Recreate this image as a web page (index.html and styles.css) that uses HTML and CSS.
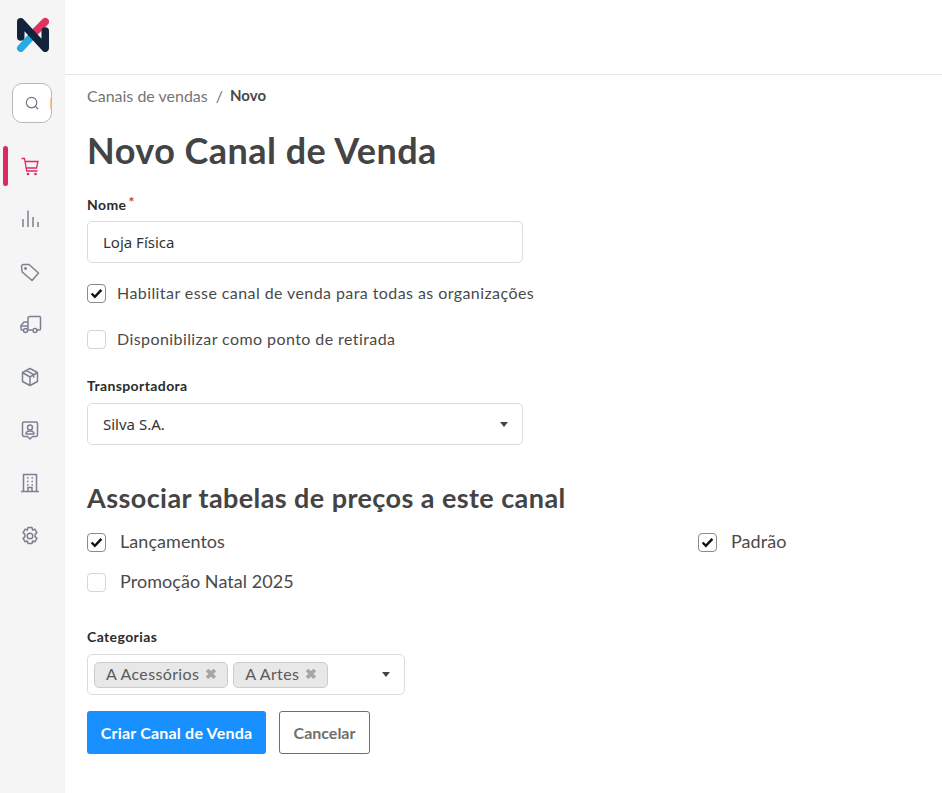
FILE: index.html
```html
<!DOCTYPE html>
<html lang="pt-BR">
<head>
  <meta charset="UTF-8" />
  <meta name="viewport" content="width=device-width, initial-scale=1.0"/>
  <title>Novo Canal de Venda</title>
  <link rel="stylesheet" href="styles.css">
</head>
<body>
  <aside class="sidebar">
    <svg class="logo" viewBox="0 0 33 35" width="33" height="35" fill="none" stroke-width="7.500" stroke-linecap="round" stroke-linejoin="round">
      <path d="M4.750 31.250 L15 20" stroke="#27a9e1"/>
      <path d="M29.250 4.750 L18 16" stroke="#e0315f"/>
      <path d="M4.750 20 V4.750 L29.250 31.250 V14" stroke="#14233c"/>
    </svg>
    <div class="search-box">
      <svg viewBox="0 0 16 16" width="14" height="14" fill="none" stroke="#6c7280" stroke-width="1.300"><circle cx="7.500" cy="7.500" r="6"/><path d="M12 12l3 3"/></svg>
      <span class="search-mark"></span>
    </div>
    <nav class="nav">
      <a class="nav-item active">
        <svg viewBox="0 0 20 20" width="20" height="20" fill="none" stroke="#e0285f" stroke-width="1.300"><path d="M1.500 2.500H4.500L6.700 15H17.500M5 5.500H18L16.500 12H6"/><circle cx="8" cy="18" r=".7"/><circle cx="15.500" cy="18" r=".7"/></svg>
      </a>
      <a class="nav-item">
        <svg viewBox="0 0 20 20" width="20" height="20" fill="none" stroke="#7d8090" stroke-width="1.500"><path d="M3 18v-8M8 18V1.500M13 18V8M18 18v-5"/></svg>
      </a>
      <a class="nav-item">
        <svg viewBox="0 0 20 20" width="20" height="20" fill="none" stroke="#7d8090" stroke-width="1.500"><path d="M1.500 4.500a2 2 0 0 1 2-2h5.500l9.500 8.500-6.500 7.500-9.800-8.500z" stroke-linejoin="round"/><circle cx="5.500" cy="6.500" r=".7"/></svg>
      </a>
      <a class="nav-item truck">
        <svg viewBox="0 0 22 20" width="22" height="20" fill="none" stroke="#7d8090" stroke-width="1.500"><path d="M8 15V4.500a2 2 0 0 1 2-2h9.500a1 1 0 0 1 1 1V15a1 1 0 0 1-1 1h-3.500M12.500 16H8M3.500 16H2a1 1 0 0 1-1-1v-3.500L4 8h4"/><path d="M1 12h7"/><circle cx="5.500" cy="16.500" r="2"/><circle cx="15" cy="16.500" r="2"/></svg>
      </a>
      <a class="nav-item">
        <svg viewBox="0 0 20 20" width="20" height="20" fill="none" stroke="#7d8090" stroke-width="1.500" stroke-linejoin="round"><path d="M10 1.500l7.500 4v9L10 18.500l-7.500-4v-9zM2.500 5.500L10 10l7.500-4.500M10 10v8.500M6.200 3.500l7.500 4.200v3"/></svg>
      </a>
      <a class="nav-item">
        <svg viewBox="0 0 20 20" width="20" height="20" fill="none" stroke="#7d8090" stroke-width="1.500" stroke-linejoin="round"><path d="M4 2h12a1.500 1.500 0 0 1 1.500 1.500v11.500a1.500 1.500 0 0 1-1.500 1.500h-3.500L10 19l-2.500-2.500H4A1.500 1.500 0 0 1 2.500 15V3.500A1.500 1.500 0 0 1 4 2z"/><circle cx="10" cy="7.500" r="2.500"/><path d="M6 14c0-4 8-4 8 0z"/></svg>
      </a>
      <a class="nav-item">
        <svg viewBox="0 0 20 20" width="20" height="20" fill="none" stroke="#7d8090" stroke-width="1.500"><path d="M1 18.500h18M3.500 18.500V1.500h13v17M8 18.500v-4h4v4"/><path d="M7 5h1.500M11.500 5H13M7 8.500h1.500M11.500 8.500H13M7 12h1.500M11.500 12H13"/></svg>
      </a>
      <a class="nav-item">
        <svg viewBox="0 0 20 20" width="20" height="20" fill="none" stroke="#7d8090" stroke-width="1.500" stroke-linejoin="round"><path d="M8 1.500h4l.6 2.500 2.300-.8 2 3.400-1.800 1.800v2.200l1.800 1.800-2 3.400-2.300-.8-.6 2.500H8l-.6-2.500-2.300.8-2-3.400 1.800-1.800V8.400L3.100 6.600l2-3.400 2.300.8z"/><circle cx="10" cy="10" r="2.800"/></svg>
      </a>
    </nav>
  </aside>

  <div class="page">
    <header class="topbar"></header>
    <main class="content">
      <div class="breadcrumb"><span>Canais de vendas</span><span class="sep">/</span><strong>Novo</strong></div>
      <h1>Novo Canal de Venda</h1>

      <form class="form">
        <label class="field-label">Nome<span class="req">*</span></label>
        <input class="text-input" type="text" value="Loja Física">

        <label class="check-row first"><span class="box checked"><svg viewBox="0 0 16 16" width="13" height="13"><path d="M2 8l4 4 8-8.500" fill="none" stroke="#111" stroke-width="3"/></svg></span><span class="check-text">Habilitar esse canal de venda para todas as organizações</span></label>
        <label class="check-row"><span class="box"></span><span class="check-text">Disponibilizar como ponto de retirada</span></label>

        <label class="field-label carrier">Transportadora</label>
        <div class="select-box"><span>Silva S.A.</span><i class="caret"></i></div>

        <h2>Associar tabelas de preços a este canal</h2>
        <div class="price-grid">
          <label class="price-row"><span class="box checked"><svg viewBox="0 0 16 16" width="13" height="13"><path d="M2 8l4 4 8-8.500" fill="none" stroke="#111" stroke-width="3"/></svg></span><span class="check-text">Lançamentos</span></label>
          <label class="price-row"><span class="box checked"><svg viewBox="0 0 16 16" width="13" height="13"><path d="M2 8l4 4 8-8.500" fill="none" stroke="#111" stroke-width="3"/></svg></span><span class="check-text">Padrão</span></label>
          <label class="price-row"><span class="box"></span><span class="check-text">Promoção Natal 2025</span></label>
        </div>

        <label class="field-label categories">Categorias</label>
        <div class="multi-select">
          <span class="tag">A Acessórios<b>✖</b></span>
          <span class="tag">A Artes<b>✖</b></span>
          <i class="caret"></i>
        </div>

        <div class="actions">
          <button type="button" class="btn-primary">Criar Canal de Venda</button>
          <button type="button" class="btn-outline">Cancelar</button>
        </div>
      </form>
    </main>
  </div>
</body>
</html>
```

FILE: styles.css
```css
* {
  box-sizing: border-box;
}

body {
  margin: 0;
  height: 793px;
  overflow: hidden;
  display: flex;
  background: #fff;
  color: #4a4a4a;
  font-family: 'Lato', 'Noto Sans', sans-serif;
  font-size: 16px;
}

.sidebar {
  width: 65px;
  flex: none;
  background: #f5f5f5;
  display: flex;
  flex-direction: column;
  align-items: flex-start;
  padding-top: 17px;
}

.logo {
  margin-left: 16px;
}

.search-box {
  width: 40px;
  height: 40px;
  margin: 31px 0 0 12px;
  background: #fff;
  border: 1px solid #b9b9c0;
  border-radius: 10px;
  display: flex;
  align-items: center;
  padding-left: 12px;
  position: relative;
}

.search-mark {
  position: absolute;
  right: 0;
  top: 14px;
  height: 11px;
  width: 1px;
  background: #f3c9a4;
}

.nav {
  width: 100%;
  margin-top: 23px;
  display: flex;
  flex-direction: column;
  gap: 13px;
}

.nav-item {
  height: 40px;
  display: flex;
  align-items: center;
  padding-left: 20px;
  position: relative;
}

.nav-item.truck {
  margin-top: -1px;
}

.nav-item.active::before {
  content: "";
  position: absolute;
  left: 3px;
  top: 0;
  width: 5px;
  height: 40px;
  border-radius: 3px;
  background: #dc2a60;
}

.page {
  flex: 1;
  min-width: 0;
}

.topbar {
  height: 75px;
  border-bottom: 1px solid #e6e6e6;
}

.content {
  padding: 9px 22px 0;
}

.breadcrumb {
  display: flex;
  align-items: center;
  height: 22px;
  color: #757575;
  font-size: 16px;
}

.breadcrumb .sep {
  margin: 0 7px 0 8px;
}

.breadcrumb strong {
  color: #4a4a4a;
  font-size: 15px;
}

h1 {
  margin: 22px 0 0;
  font-size: 36px;
  line-height: 44px;
  font-weight: 700;
  letter-spacing: .47px;
  color: #444;
}

.form {
  margin-top: 23px;
  display: block;
}

.field-label {
  display: block;
  font-size: 14px;
  font-weight: 700;
  letter-spacing: .4px;
  line-height: 20px;
  color: #2b2b2b;
}

.req {
  color: #e0284f;
  margin-left: 2px;
  position: relative;
  top: -3px;
}

.text-input {
  display: block;
  width: 436px;
  height: 42px;
  margin-top: 6px;
  padding: 0 15px;
  border: 1px solid #dcdcdc;
  border-radius: 5px;
  font-family: 'Noto Sans', sans-serif;
  font-size: 15px;
  color: #333;
}

.box {
  width: 19px;
  height: 19px;
  flex: none;
  border: 1px solid #d5d5d5;
  border-radius: 4px;
  background: #fff;
  display: inline-flex;
  align-items: center;
  justify-content: center;
}

.box.checked {
  border-color: #8a8a8a;
}

.check-text {
  margin-bottom: 2px;
}

.check-row {
  display: flex;
  align-items: center;
  gap: 11px;
  height: 24px;
  margin-top: 22px;
  font-size: 16px;
  letter-spacing: .42px;
  color: #4a4a4a;
}

.check-row.first {
  margin-top: 18px;
}

.carrier {
  margin-top: 25px;
}

.select-box {
  width: 436px;
  height: 42px;
  margin-top: 7px;
  padding: 0 14px 0 15px;
  border: 1px solid #dcdcdc;
  border-radius: 5px;
  display: flex;
  align-items: center;
  justify-content: space-between;
  font-family: 'Noto Sans', sans-serif;
  font-size: 15px;
  color: #333;
}

.caret {
  width: 0;
  height: 0;
  border: 4px solid transparent;
  border-top: 5px solid #444;
  border-bottom: 0;
}

h2 {
  margin: 36px 0 0;
  font-size: 27px;
  line-height: 34px;
  font-weight: 700;
  letter-spacing: .42px;
  color: #444;
}

.price-grid {
  display: grid;
  grid-template-columns: 611px 1fr;
  row-gap: 16px;
  margin-top: 15px;
}

.price-row {
  display: flex;
  align-items: center;
  gap: 14px;
  height: 24px;
  font-size: 18px;
  letter-spacing: .05px;
  color: #4a4a4a;
}

.categories {
  margin-top: 33px;
}

.multi-select {
  width: 318px;
  height: 41px;
  margin-top: 7px;
  padding: 0 14px 0 6px;
  border: 1px solid #dcdcdc;
  border-radius: 5px;
  display: flex;
  align-items: center;
  gap: 5px;
}

.multi-select .caret {
  margin-left: auto;
}

.tag {
  height: 26px;
  padding: 0 10px 2px 11px;
  display: inline-flex;
  align-items: center;
  gap: 6px;
  background: #e8e8e8;
  border: 1px solid #ccc;
  border-radius: 5px;
  color: #5a5a5a;
  font-size: 16px;
  letter-spacing: .35px;
}

.tag b {
  color: #a5a5a5;
  font-size: 14px;
  letter-spacing: 0;
}

.actions {
  display: flex;
  gap: 13px;
  margin-top: 16px;
}

button {
  height: 43px;
  border-radius: 3px;
  font-family: inherit;
  font-size: 16px;
  font-weight: 700;
  padding: 0;
  cursor: pointer;
}

.btn-primary {
  width: 179px;
  background: #1890ff;
  border: none;
  color: #fff;
  letter-spacing: .2px;
}

.btn-outline {
  width: 91px;
  background: #fff;
  border: 1px solid #6f6f6f;
  color: #6f6f6f;
}
```
